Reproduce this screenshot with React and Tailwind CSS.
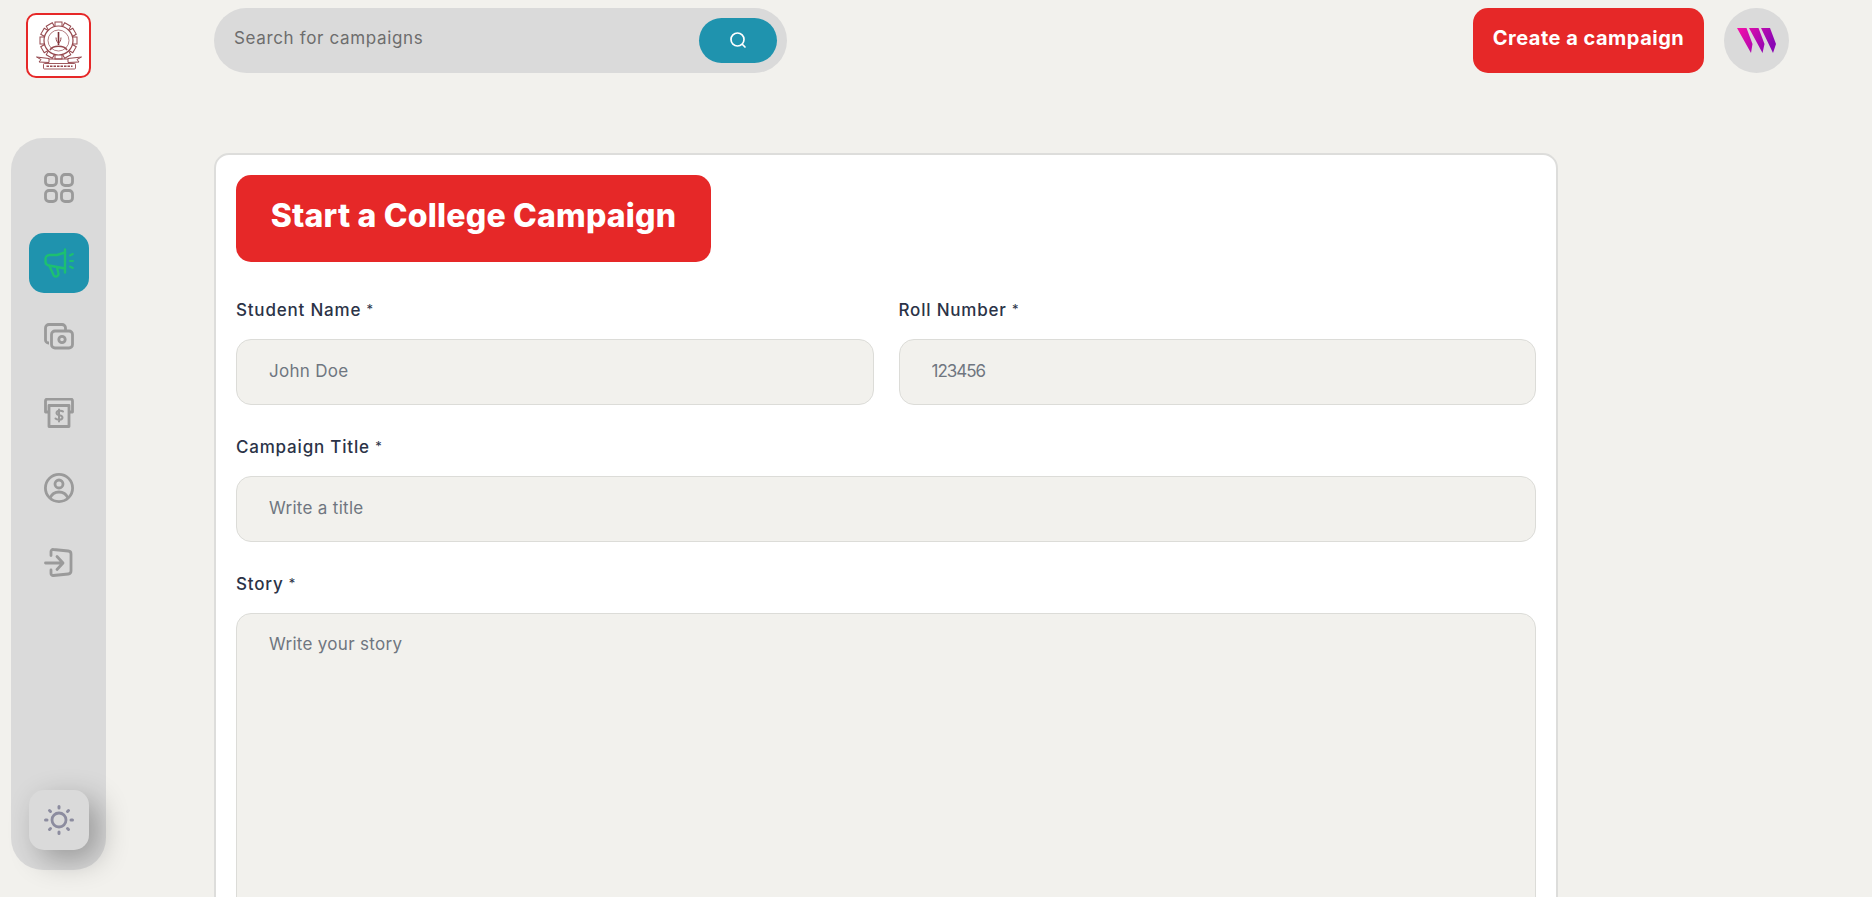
const font = { fontFamily: "Inter, 'Liberation Sans', sans-serif" };

function Logo() {
  const teeth = Array.from({ length: 12 }, (_, i) => i * 30);
  return (
    <div className="w-[65px] h-[65px] rounded-[10px] border-2 border-[#e62828] bg-white flex items-center justify-center shrink-0">
      <svg width="52" height="54" viewBox="0 0 52 54" fill="none" stroke="#95474d">
        {teeth.map((a) => (
          <rect key={a} x="22" y="3" width="7" height="6" strokeWidth="1" transform={`rotate(${a} 25.500 21.500)`} />
        ))}
        <circle cx="25.500" cy="21.500" r="14.500" fill="white" strokeWidth="1.200" />
        <circle cx="25.500" cy="21.500" r="10.500" strokeWidth="0.700" />
        <path d="M25.500 13v13" strokeWidth="1.600" stroke="#7c2f35" />
        <path d="M23 18.500c0 3 1.500 5 2.500 6 1-1 2.500-3 2.500-6" strokeWidth="1" />
        <path d="M17 31c3-5 14-5 17 0" strokeWidth="1.600" />
        <path d="M3.500 38l12.500 1.500v4L6 43l2-2.500zM48.500 38 35 39.500v4L46 43l-2-2.500z" strokeWidth="1" fill="white" />
        <path d="M16 40h19" strokeWidth="1" />
        <rect x="10.500" y="44.500" width="32" height="5.500" rx="1" strokeWidth="0.900" fill="white" />
        <path d="M13.500 47.250h26" strokeWidth="1.400" strokeDasharray="2.500 1" />
      </svg>
    </div>
  );
}

function Dashboard() {
  return (
    <svg width="30" height="30" viewBox="0 0 30 30" fill="none" stroke="#9a9a9a" strokeWidth="2.800">
      <rect x="1.500" y="1.500" width="11" height="11" rx="3.500" />
      <rect x="17.500" y="1.500" width="11" height="11" rx="3.500" />
      <rect x="1.500" y="17.500" width="11" height="11" rx="3.500" />
      <rect x="17.500" y="17.500" width="11" height="11" rx="3.500" />
    </svg>
  );
}
function Megaphone() {
  return (
    <svg width="30" height="30" viewBox="0 0 30 30" fill="none" stroke="#1dc071" strokeWidth="2.400" strokeLinecap="round" strokeLinejoin="round">
      <path d="M21 1.500v23" />
      <path d="M21 4.500 13 7H5.500A4 4 0 0 0 1.500 11v2.500a4 4 0 0 0 3.500 4L21 20.500" />
      <path d="M5.500 18 9.500 27a2.500 2.500 0 0 0 3.300 1.300c1.500-.7 2-2 1.500-3.500L13 19.500" />
      <path d="M26 7.500l2.800-1.500M26 13h3M26 18.500l2.800 1.500" strokeWidth="2" />
    </svg>
  );
}
function Payment() {
  return (
    <svg width="30" height="30" viewBox="0 0 30 30" fill="none" stroke="#9a9a9a" strokeWidth="2.800" strokeLinejoin="round">
      <path d="M5 20H4.500a3 3 0 0 1-3-3V5a3.500 3.500 0 0 1 3.500-3.500h13A3.500 3.500 0 0 1 21.500 5v2" />
      <rect x="7.500" y="8" width="21" height="17" rx="3.500" />
      <circle cx="18" cy="16.500" r="3.200" />
    </svg>
  );
}
function Withdraw() {
  return (
    <svg width="30" height="30" viewBox="0 0 30 30" fill="none" stroke="#9a9a9a" strokeWidth="2.800" strokeLinejoin="round">
      <path d="M5 14H1.500V3a2 2 0 0 1 2-2h23a2 2 0 0 1 2 2v11H25" />
      <path d="M5 7.500h20V28.500H5z" />
      <path d="M19 13.500c-1-1-6.500-1.500-6.500 1.500s6 1.500 6 4.500-5.500 2.500-7 1M15 11.500v12" strokeWidth="2" strokeLinecap="round" />
    </svg>
  );
}
function Profile() {
  return (
    <svg width="30" height="30" viewBox="0 0 30 30" fill="none" stroke="#9a9a9a" strokeWidth="2.800">
      <circle cx="15" cy="15" r="13.600" />
      <circle cx="15" cy="11" r="4" />
      <path d="M6 25c2-4.500 5.500-6 9-6s7 1.500 9 6" />
    </svg>
  );
}
function Logout() {
  return (
    <svg width="30" height="30" viewBox="0 0 30 30" fill="none" stroke="#9a9a9a" strokeWidth="2.800" strokeLinecap="round" strokeLinejoin="round">
      <path d="M7 7.500V3.500a2 2 0 0 1 2.300-2l15 1.500a3 3 0 0 1 2.700 3v17a3 3 0 0 1-2.700 3l-15 1.500a2 2 0 0 1-2.300-2V22" />
      <path d="M1.500 15h17M13 8.500l6 6.500-6 6.500" />
    </svg>
  );
}
function Sun() {
  return (
    <svg width="30" height="30" viewBox="0 0 30 30" fill="none" stroke="#8c8c9f" strokeLinecap="round">
      <circle cx="15" cy="15" r="7" strokeWidth="2.800" />
      <path d="M15 1.500v1.500M15 27v1.500M1.500 15H3M27 15h1.500M5.500 5.500l1 1M23.500 23.500l1 1M24.500 5.500l-1 1M6.500 23.500l-1 1" strokeWidth="3" />
    </svg>
  );
}

function Brand() {
  return (
    <svg width="40" height="26" viewBox="0 0 40 26">
      <defs>
        <linearGradient id="brandGrad" x1="0" x2="1" y1="0" y2="0.400">
          <stop offset="0" stopColor="#f70fa8" />
          <stop offset="1" stopColor="#8a06b4" />
        </linearGradient>
      </defs>
      <path
        fill="url(#brandGrad)"
        d="M0 0h9.500l6 16-1.500 9zM12 0h9.500l6 16-2 9zM24 0h9l6 16-3 9z"
      />
    </svg>
  );
}

function Label({ text }) {
  return (
    <span className="text-[17px] leading-[22px] font-medium text-[#2b3347] tracking-[0.8px] mb-[18px]">
      {text} <span className="text-[13px] leading-[0] font-normal align-[2px]">*</span>
    </span>
  );
}

function Field({ label, placeholder, className = "", inputClass = "tracking-[0.3px]" }) {
  return (
    <label className={`flex flex-col ${className}`}>
      <Label text={label} />
      <input
        readOnly
        placeholder={placeholder}
        className={`w-full h-[66px] px-[32px] pb-[2px] rounded-[15px] bg-[#f2f1ed] border border-[#dcdcd8] text-[17px] placeholder:text-[#6f7680] outline-none ${inputClass}`}
      />
    </label>
  );
}

export default function App() {
  return (
    <div style={font} className="h-screen overflow-hidden bg-[#f2f1ed] flex flex-col">
      <header className="flex items-start pt-[8px] pl-[26px] pr-[83px] shrink-0">
        <div className="pt-[5px] w-[188px] shrink-0">
          <Logo />
        </div>
        <div className="w-[573px] h-[65px] rounded-full bg-[#dadada] flex items-center pl-[20px] pr-[10px]">
          <span className="flex-1 pb-[3px] text-[#6d6d6d] text-[17px] tracking-[0.65px]">Search for campaigns</span>
          <button className="w-[78px] h-[45px] pb-[1px] rounded-[24px] bg-[#1f93ae] flex items-center justify-center">
            <svg width="18" height="18" viewBox="0 0 18 18" fill="none" stroke="white" strokeWidth="1.700" strokeLinecap="round">
              <circle cx="8.500" cy="8.500" r="6.500" />
              <path d="M13.500 13.500l2.500 2.500" />
            </svg>
          </button>
        </div>
        <button className="ml-auto w-[231px] h-[65px] pb-[6px] rounded-[15px] bg-[#e62828] text-white font-bold text-[20px] tracking-[0.5px]">
          Create a campaign
        </button>
        <div className="ml-[20px] w-[65px] h-[65px] rounded-full bg-[#dadada] flex items-center justify-center">
          <Brand />
        </div>
      </header>

      <div className="flex flex-1 min-h-0 pt-[60px]">
        <div className="w-[214px] shrink-0 pl-[11px]">
          <nav className="w-[95px] h-[732px] rounded-[32px] bg-[#dadada] flex flex-col items-center py-[20px]">
            <div className="flex flex-col gap-[15px]">
              <div className="w-[60px] h-[60px] flex items-center justify-center"><Dashboard /></div>
              <div className="w-[60px] h-[60px] rounded-[15px] bg-[#1f93ae] flex items-center justify-center"><Megaphone /></div>
              <div className="w-[60px] h-[60px] flex items-center justify-center"><Payment /></div>
              <div className="w-[60px] h-[60px] flex items-center justify-center"><Withdraw /></div>
              <div className="w-[60px] h-[60px] flex items-center justify-center"><Profile /></div>
              <div className="w-[60px] h-[60px] flex items-center justify-center"><Logout /></div>
            </div>
            <div className="mt-auto w-[60px] h-[60px] rounded-[15px] bg-[#dadada] shadow-[10px_10px_30px_rgba(0,0,0,0.3)] flex items-center justify-center"><Sun /></div>
          </nav>
        </div>

        <main className="mt-[15px] w-[1344px] h-[1100px] shrink-0 rounded-[15px] bg-white border-2 border-[#dddddb] px-[20px] pt-[20px]">
          <div className="w-[475px] h-[87px] pb-[6px] rounded-[15px] bg-[#e62828] flex items-center justify-center mb-[37px]">
            <h1 className="text-white font-extrabold text-[32px] tracking-[0.2px]">Start a College Campaign</h1>
          </div>
          <div className="flex gap-[25px] mb-[31px]">
            <Field className="flex-1" label="Student Name" placeholder="John Doe" />
            <Field className="flex-1" label="Roll Number" placeholder="123456" inputClass="tracking-[-1px]" />
          </div>
          <Field className="mb-[31px]" label="Campaign Title" placeholder="Write a title" />
          <label className="flex flex-col">
            <Label text="Story" />
            <textarea
              readOnly
              placeholder="Write your story"
              className="w-full h-[500px] px-[32px] py-[18px] rounded-[15px] bg-[#f2f1ed] border border-[#dcdcd8] text-[17px] tracking-[0.3px] placeholder:text-[#6f7680] outline-none resize-none"
            />
          </label>
        </main>
      </div>
    </div>
  );
}
